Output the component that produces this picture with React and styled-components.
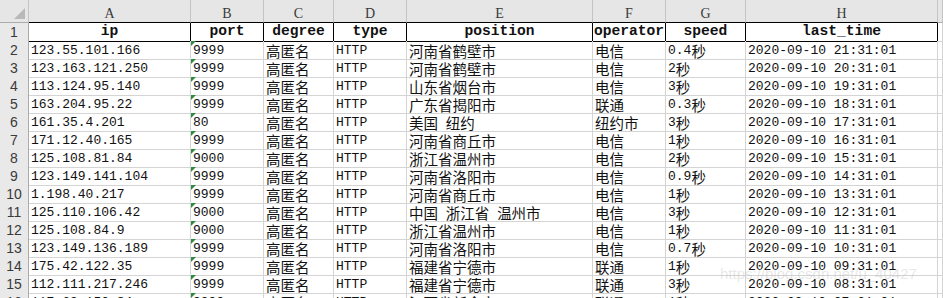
import React from "react";
import styled, { createGlobalStyle, css } from "styled-components";

const Global = createGlobalStyle`
  html, body { margin: 0; padding: 0; background: #fff; overflow: hidden; }
  body { width: 943px; height: 298px; }
`;

const COLS = "29px 162px 73px 70px 73px 186px 73px 80px 192px 1fr";

const Sheet = styled.div`
  position: relative;
  width: 943px;
  height: 298px;
  overflow: hidden;
  background: #fff;
  font-family: "Liberation Mono", "Noto Sans CJK SC", monospace;
`;

const Row = styled.div`
  display: grid;
  grid-template-columns: ${COLS};
  height: ${(p) => (p.$head ? 23 : 18)}px;
`;

const Corner = styled.div`
  position: relative;
  background: #e6e6e6;
  border-right: 1px solid #c4c4c4;
  border-bottom: 1px solid #ababab;
  &::after {
    content: "";
    position: absolute;
    right: 3px;
    bottom: 3px;
    width: 0;
    height: 0;
    border-left: 11px solid transparent;
    border-bottom: 11px solid #b9b9b9;
  }
`;

const ColLetter = styled.div`
  background: #e6e6e6;
  border-right: 1px solid #c4c4c4;
  border-bottom: 1px solid ${(p) => (p.$filler ? "#ababab" : "#000")};
  font-family: "Liberation Serif", serif;
  font-size: 14px;
  color: #3a3a3a;
  text-align: center;
  line-height: 16px;
  padding-top: 6px;
  box-sizing: border-box;
`;

const RowNum = styled.div`
  background: #e9e9e9;
  border-right: 1px solid #ababab;
  border-bottom: 1px solid #d2d2d2;
  font-family: "Liberation Sans", sans-serif;
  font-size: 14px;
  color: #3a3a3a;
  text-align: center;
  line-height: 17px;
  padding-top: 1px;
  box-sizing: border-box;
`;

const Cell = styled.div`
  position: relative;
  box-sizing: border-box;
  border-right: 1px solid ${(p) => (p.$title && !p.$filler ? "#000" : "#d4d4d4")};
  border-bottom: 1px solid ${(p) => (p.$title && !p.$filler ? "#000" : "#d4d4d4")};
  padding: 3px 0 0 2px;
  font-size: 13px;
  line-height: 14px;
  color: #111;
  white-space: nowrap;
  overflow: hidden;
  ${(p) =>
    p.$title &&
    css`
      font-weight: bold;
      font-size: 14.6px;
      line-height: 15px;
      text-align: center;
      padding: 1px 0 0 0;
      overflow: visible;
    `}
  ${(p) =>
    p.$flag &&
    css`
      &::before {
        content: "";
        position: absolute;
        left: 0;
        top: 0;
        width: 0;
        height: 0;
        border-top: 5px solid #2e8b3e;
        border-right: 5px solid transparent;
      }
    `}
`;

const Cjk = styled.span`
  font-family: "Noto Sans CJK SC", sans-serif;
  font-size: 14.5px;
  line-height: 14px;
  vertical-align: top;
`;

const Watermark = styled.div`
  position: absolute;
  left: 720px;
  top: 265px;
  font-family: "Liberation Sans", sans-serif;
  font-size: 15px;
  color: rgba(175, 175, 175, 0.3);
  white-space: nowrap;
  pointer-events: none;
`;

function renderText(s) {
  const parts = String(s).split(/([\u3000-\u9fff]+)/);
  return parts.map((part, i) =>
    /[\u3000-\u9fff]/.test(part) ? <Cjk key={i}>{part}</Cjk> : part
  );
}

const LETTERS = ["A", "B", "C", "D", "E", "F", "G", "H"];
const HEADERS = ["ip", "port", "degree", "type", "position", "operator", "speed", "last_time"];

const DATA = [
  ["123.55.101.166", "9999", "高匿名", "HTTP", "河南省鹤壁市", "电信", "0.4秒", "2020-09-10 21:31:01"],
  ["123.163.121.250", "9999", "高匿名", "HTTP", "河南省鹤壁市", "电信", "2秒", "2020-09-10 20:31:01"],
  ["113.124.95.140", "9999", "高匿名", "HTTP", "山东省烟台市", "电信", "3秒", "2020-09-10 19:31:01"],
  ["163.204.95.22", "9999", "高匿名", "HTTP", "广东省揭阳市", "联通", "0.3秒", "2020-09-10 18:31:01"],
  ["161.35.4.201", "80", "高匿名", "HTTP", "美国 纽约", "纽约市", "3秒", "2020-09-10 17:31:01"],
  ["171.12.40.165", "9999", "高匿名", "HTTP", "河南省商丘市", "电信", "1秒", "2020-09-10 16:31:01"],
  ["125.108.81.84", "9000", "高匿名", "HTTP", "浙江省温州市", "电信", "2秒", "2020-09-10 15:31:01"],
  ["123.149.141.104", "9999", "高匿名", "HTTP", "河南省洛阳市", "电信", "0.9秒", "2020-09-10 14:31:01"],
  ["1.198.40.217", "9999", "高匿名", "HTTP", "河南省商丘市", "电信", "1秒", "2020-09-10 13:31:01"],
  ["125.110.106.42", "9000", "高匿名", "HTTP", "中国 浙江省 温州市", "电信", "3秒", "2020-09-10 12:31:01"],
  ["125.108.84.9", "9000", "高匿名", "HTTP", "浙江省温州市", "电信", "1秒", "2020-09-10 11:31:01"],
  ["123.149.136.189", "9999", "高匿名", "HTTP", "河南省洛阳市", "电信", "0.7秒", "2020-09-10 10:31:01"],
  ["175.42.122.35", "9999", "高匿名", "HTTP", "福建省宁德市", "联通", "1秒", "2020-09-10 09:31:01"],
  ["112.111.217.246", "9999", "高匿名", "HTTP", "福建省宁德市", "联通", "3秒", "2020-09-10 08:31:01"],
  ["117.69.150.84", "9999", "高匿名", "HTTP", "江西省新余市", "联通", "1秒", "2020-09-10 07:31:01"],
];

export default function App() {
  return (
    <>
      <Global />
      <Sheet>
        <Row $head>
          <Corner />
          {LETTERS.map((l) => (
            <ColLetter key={l}>{l}</ColLetter>
          ))}
          <ColLetter $filler />
        </Row>
        <Row>
          <RowNum>1</RowNum>
          {HEADERS.map((h) => (
            <Cell key={h} $title>
              {h}
            </Cell>
          ))}
          <Cell $filler />
        </Row>
        {DATA.map((r, i) => (
          <Row key={i}>
            <RowNum>{i + 2}</RowNum>
            {r.map((v, j) => (
              <Cell key={j} $flag={j === 1}>
                {renderText(v)}
              </Cell>
            ))}
            <Cell $filler />
          </Row>
        ))}
        <Watermark>https://blog.csdn.net/u_40427</Watermark>
      </Sheet>
    </>
  );
}
